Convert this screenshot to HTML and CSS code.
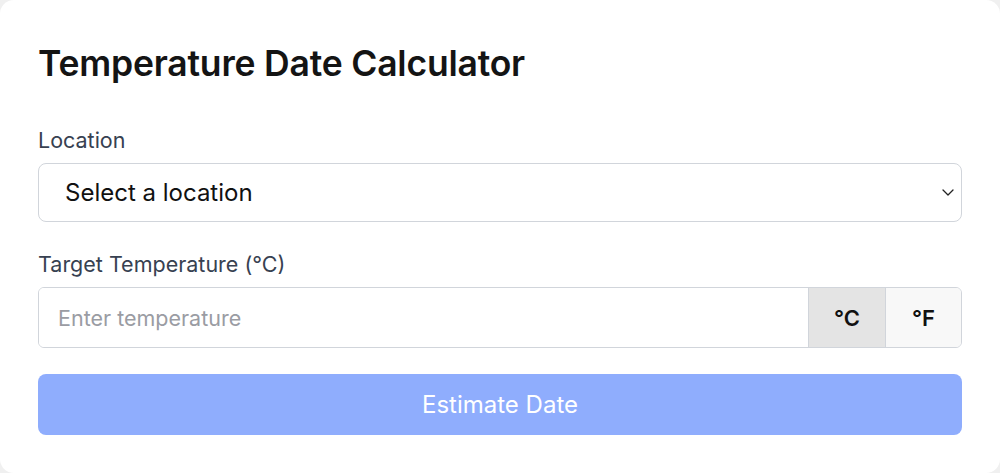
FILE: index.html
```html
<!DOCTYPE html>
<html lang="en">
<head>
<meta charset="utf-8">
<title>Temperature Date Calculator</title>
<link rel="stylesheet" href="styles.css">
</head>
<body>
<main class="card">
  <h1 class="title">Temperature Date Calculator</h1>
  <div class="field field-first">
    <label class="label" for="loc">Location</label>
    <div class="select" id="loc">
      <span class="select-text">Select a location</span>
      <svg class="chevron" width="12" height="7" viewBox="0 0 12 7"><path d="M1 1l5 5 5-5" fill="none" stroke="#222" stroke-width="1.3" stroke-linecap="round" stroke-linejoin="round"/></svg>
    </div>
  </div>
  <div class="field">
    <label class="label" for="temp">Target Temperature (°C)</label>
    <div class="input-group">
      <input id="temp" class="input" type="text" placeholder="Enter temperature">
      <button class="unit unit-active">°C</button>
      <button class="unit">°F</button>
    </div>
  </div>
  <button class="submit">Estimate Date</button>
</main>
</body>
</html>
```
FILE: styles.css
```css
* { box-sizing: border-box; }
html, body { margin: 0; padding: 0; }
body {
  background: #f0f0f0;
  font-family: Inter, "Noto Sans", sans-serif;
  width: 1000px;
  height: 473px;
  overflow: hidden;
}
.card {
  width: 1000px;
  height: 473px;
  background: #fff;
  border-radius: 14px;
  padding: 40px 38px;
  display: flex;
  flex-direction: column;
}
.card > * { flex-shrink: 0; }
.title {
  margin: 0 0 39px;
  font-size: 35.5px;
  font-weight: 600;
  color: #141414;
  line-height: 48px;
  letter-spacing: -0.2px;
}
.field { display: flex; flex-direction: column; }
.field > * { flex-shrink: 0; }
.field-first { margin-bottom: 29px; }
.label {
  font-size: 21.5px;
  color: #374151;
  line-height: 26px;
  margin-bottom: 10px;
}
.select {
  height: 59px;
  border: 1px solid #d1d5db;
  border-radius: 8px;
  display: flex;
  align-items: center;
  justify-content: space-between;
  padding: 0 7px 0 26px;
}
.select-text { font-size: 24px; color: #111; }
.input-group {
  display: flex;
  height: 61px;
  border: 1px solid #d1d5db;
  border-radius: 6px;
  overflow: hidden;
}
.input {
  flex: 1;
  min-width: 0;
  border: 0;
  outline: none;
  padding: 0 19px;
  font-family: inherit;
  font-size: 21.5px;
  color: #111;
  border-right: 1px solid #d1d5db;
}
.input::placeholder { color: #9a9ca3; }
.unit {
  width: 75px;
  border: 0;
  background: #f8f8f8;
  font-family: inherit;
  font-size: 22px;
  font-weight: 600;
  color: #111;
}
.unit-active { background: #e4e4e4; border-right: 1px solid #d1d5db; width: 77px; }
.submit {
  margin-top: 26px;
  height: 61px;
  border: 0;
  border-radius: 8px;
  background: #8fadfd;
  color: #fff;
  font-family: inherit;
  font-size: 24px;
}
```
